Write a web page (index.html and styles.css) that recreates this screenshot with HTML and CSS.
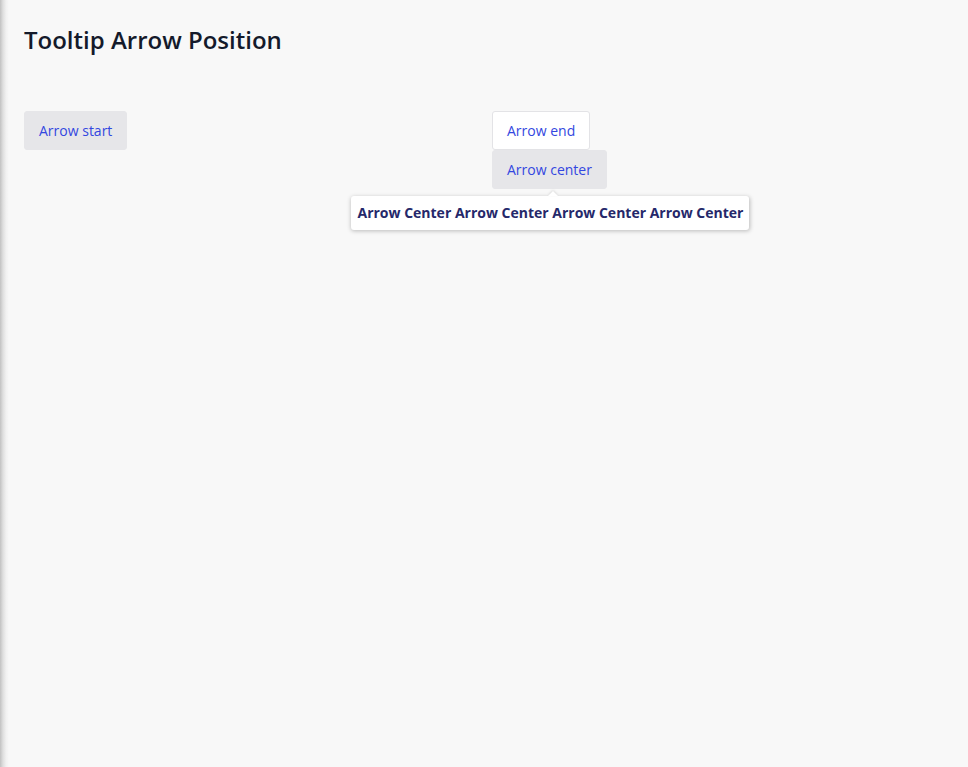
FILE: index.html
```html
<!DOCTYPE html>
<html>
<head>
<meta charset="utf-8">
<link rel="stylesheet" href="styles.css">
</head>
<body>
<div class="page">
  <h1 class="title">Tooltip Arrow Position</h1>
  <div class="grid">
    <div class="col">
      <button class="btn btn-gray">Arrow start</button>
    </div>
    <div class="col">
      <button class="btn btn-white">Arrow end</button>
      <div class="anchor">
        <button class="btn btn-gray">Arrow center</button>
        <div class="tooltip">Arrow Center Arrow Center Arrow Center Arrow Center</div>
      </div>
    </div>
  </div>
</div>
</body>
</html>
```
FILE: styles.css
```css
html, body {
  margin: 0;
  padding: 0;
  height: 100%;
}
body {
  background: #f8f8f8;
  font-family: "Open Sans", "Noto Sans", sans-serif;
}
.page {
  min-height: 100%;
  box-sizing: border-box;
  padding: 24px;
  background: linear-gradient(to right, rgba(0,0,0,0.22) 0, rgba(0,0,0,0.1) 3px, rgba(0,0,0,0.03) 6px, rgba(0,0,0,0) 9px);
}
.title {
  margin: 0;
  font-size: 24px;
  font-weight: 600;
  color: #141a2b;
  line-height: 32px;
}
.grid {
  margin-top: 55px;
  display: grid;
  grid-template-columns: 1fr 1fr;
  column-gap: 16px;
}
.col {
  display: flex;
  flex-direction: column;
  align-items: flex-start;
}
.btn {
  font-family: inherit;
  font-size: 14px;
  color: #3347e0;
  height: 39px;
  padding: 0 14px;
  border-radius: 3px;
  cursor: pointer;
}
.btn-gray {
  background: #e6e6e9;
  border: 1px solid #e6e6e9;
}
.btn-white {
  background: #ffffff;
  border: 1px solid #e3e3e6;
}
.anchor {
  position: relative;
}
.tooltip {
  position: absolute;
  top: 46px;
  left: 50%;
  transform: translateX(calc(-50% + 1px));
  white-space: nowrap;
  background: #fff;
  color: #25286a;
  font-weight: 700;
  font-size: 14px;
  line-height: 20px;
  padding: 7px 6px 7px;
  border-radius: 3px;
  box-shadow: 0 1px 4px rgba(0,0,0,0.25);
}
.tooltip::before {
  content: "";
  position: absolute;
  top: -5px;
  left: 50%;
  margin-left: -2px;
  border-left: 5px solid transparent;
  border-right: 5px solid transparent;
  border-bottom: 5px solid #fff;
  filter: drop-shadow(0 -1px 1px rgba(0,0,0,0.12));
}
```
